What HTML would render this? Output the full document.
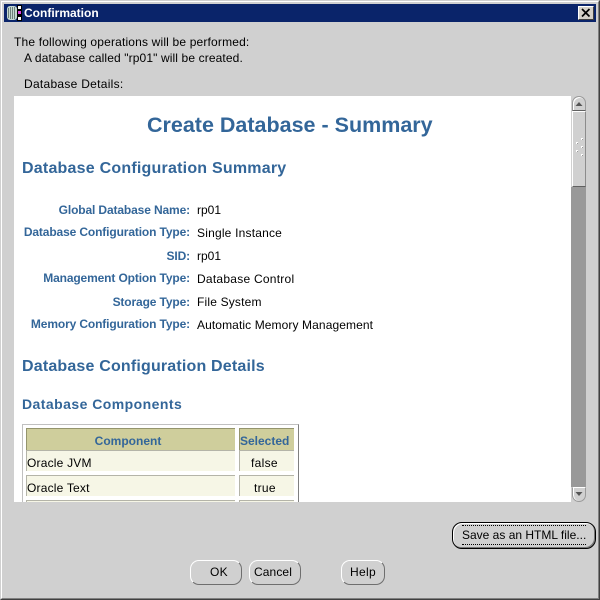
<!DOCTYPE html>
<html>
<head>
<meta charset="utf-8">
<style>
html,body{margin:0;padding:0}
body{width:600px;height:600px;overflow:hidden;position:relative;background:#d0d0d0;font-family:"Liberation Sans",sans-serif;font-size:12px;color:#000}
.a{position:absolute;white-space:nowrap;line-height:14px}
.b{position:absolute;box-sizing:border-box}
.blue{color:#336699;font-weight:bold}
.lab{right:410px;text-align:right;letter-spacing:-.13px}
.btn{position:absolute;box-sizing:border-box;text-align:center;background:#d0d0d0;border:1px solid #6e6e6e;border-top-color:#fff;border-left-color:#fff;border-radius:9px;line-height:23px;letter-spacing:.3px}
</style>
</head>
<body>
<div class="b" style="left:0;top:0;width:600px;height:600px;border:1px solid;border-color:#d0d0d0 #404040 #404040 #d0d0d0"></div>
<div class="b" style="left:1px;top:1px;width:598px;height:598px;border:1px solid;border-color:#fff #808080 #808080 #fff"></div>
<div class="b" style="left:4px;top:4px;width:592px;height:18px;background:#0a246a"></div>
<svg class="b" style="left:6px;top:5px" width="16" height="16" viewBox="0 0 16 16">
<rect x="1" y="1" width="10" height="14" rx="3" fill="#c4d8d0"/>
<path d="M2.5 3v10M4.5 2v12M6.5 2v12M8.5 2v12" stroke="#6c807a" stroke-width="1"/>
<rect x="11" y="0" width="5" height="16" fill="#000"/>
<path d="M12 1h3v3h-3zM12 12h3v3h-3z" fill="#fff"/>
<path d="M12 6h3v3h-3z" fill="#e040e0"/>
</svg>
<div class="a" style="left:24px;top:6px;color:#fff;font-weight:bold;font-size:12px">Confirmation</div>
<div class="b" style="left:578px;top:6px;width:16px;height:14px;background:#d4d0c8;border:1px solid;border-color:#fff #404040 #404040 #fff"></div>
<svg class="b" style="left:581px;top:8px" width="10" height="10" viewBox="0 0 10 10"><path d="M1 1L8.5 8.5M8.5 1L1 8.5" stroke="#000" stroke-width="1.7"/></svg>

<div class="a" style="left:14px;top:35px;letter-spacing:.17px">The following operations will be performed:</div>
<div class="a" style="left:24px;top:51px;letter-spacing:.12px">A database called "rp01" will be created.</div>
<div class="a" style="left:24px;top:77px;letter-spacing:.28px">Database Details:</div>

<div class="b" style="left:14px;top:96px;width:557px;height:406px;background:#fff"></div>
<div class="a" style="left:147px;top:112px;line-height:26px;font-size:21.5px;font-weight:bold;color:#336699">Create Database - Summary</div>
<div class="a blue" style="left:22px;top:160px;line-height:18px;font-size:16px;letter-spacing:.22px">Database Configuration Summary</div>

<div class="a blue lab" style="top:203px">Global Database Name:</div>
<div class="a blue lab" style="top:225px">Database Configuration Type:</div>
<div class="a blue lab" style="top:249px">SID:</div>
<div class="a blue lab" style="top:271px">Management Option Type:</div>
<div class="a blue lab" style="top:295px">Storage Type:</div>
<div class="a blue lab" style="top:317px">Memory Configuration Type:</div>

<div class="a" style="left:197px;top:203px">rp01</div>
<div class="a" style="left:197px;top:226px;letter-spacing:.2px">Single Instance</div>
<div class="a" style="left:197px;top:249px">rp01</div>
<div class="a" style="left:197px;top:272px;letter-spacing:.25px">Database Control</div>
<div class="a" style="left:197px;top:295px;letter-spacing:.18px">File System</div>
<div class="a" style="left:197px;top:318px;letter-spacing:.1px">Automatic Memory Management</div>

<div class="a blue" style="left:22px;top:358px;line-height:18px;font-size:16px;letter-spacing:.18px">Database Configuration Details</div>
<div class="a blue" style="left:22px;top:396px;line-height:16px;font-size:14px;letter-spacing:.45px">Database Components</div>

<div class="b" style="left:22px;top:424px;width:277px;height:78px;border:1px solid #c0c0c0;border-right-color:#808080;border-bottom:0"></div>
<div class="b" style="left:26px;top:428px;width:209px;height:22px;background:#cfce9c;border:1px solid #94946c;border-bottom:0;border-right:0"></div>
<div class="b" style="left:239px;top:428px;width:55px;height:22px;background:#cfce9c;border:1px solid #94946c;border-bottom:0;border-right:0"></div>
<div class="a blue" style="left:26px;top:434px;width:204px;text-align:center">Component</div>
<div class="a blue" style="left:240px;top:434px">Selected</div>

<div class="b" style="left:26px;top:450px;width:209px;height:21px;background:#f6f6e6;border:1px solid #b4b4a8;border-bottom:0;border-right:0"></div>
<div class="b" style="left:239px;top:450px;width:55px;height:21px;background:#f6f6e6;border:1px solid #b4b4a8;border-bottom:0;border-right:0"></div>
<div class="a" style="left:27px;top:456px;letter-spacing:.2px">Oracle JVM</div>
<div class="a" style="left:251px;top:456px;letter-spacing:.3px">false</div>

<div class="b" style="left:26px;top:475px;width:209px;height:21px;background:#f6f6e6;border:1px solid #b4b4a8;border-bottom:0;border-right:0"></div>
<div class="b" style="left:239px;top:475px;width:55px;height:21px;background:#f6f6e6;border:1px solid #b4b4a8;border-bottom:0;border-right:0"></div>
<div class="a" style="left:27px;top:481px;letter-spacing:.2px">Oracle Text</div>
<div class="a" style="left:254px;top:481px;letter-spacing:.3px">true</div>

<div class="b" style="left:26px;top:500px;width:209px;height:2px;background:#f6f6e6;border-top:1px solid #b4b4a8;border-left:1px solid #b4b4a8"></div>
<div class="b" style="left:239px;top:500px;width:55px;height:2px;background:#f6f6e6;border-top:1px solid #b4b4a8;border-left:1px solid #b4b4a8"></div>

<!-- scrollbar -->
<div class="b" style="left:571px;top:96px;width:15px;height:406px;background:#d0d0d0"></div>
<div class="b" style="left:571px;top:187px;width:15px;height:300px;background:#999999"></div>
<div class="b" style="left:572px;top:96px;width:14px;height:15px;background:#d0d0d0;border:1px solid #9a9a9a;border-bottom:1px solid #606060;border-radius:7px 7px 0 0;box-shadow:inset 1px 1px 0 #fff"></div>
<svg class="b" style="left:575px;top:101px" width="8" height="6"><path d="M4 1L7.5 5H.5z" fill="#555"/></svg>
<div class="b" style="left:572px;top:111px;width:14px;height:76px;background:#d0d0d0;border:1px solid #8c8c8c;border-left-color:#fff;border-top-color:#fff;border-bottom:1px solid #606060"></div>
<svg class="b" style="left:575px;top:137px" width="10" height="20"><path d="M6 1h2v2h-2zM1 5h2v2h-2zM6 9h2v2h-2zM1 13h2v2h-2zM6 17h2v2h-2z" fill="#fff"/><path d="M7 2h1v1h-1zM2 6h1v1h-1zM7 10h1v1h-1zM2 14h1v1h-1zM7 18h1v1h-1z" fill="#999"/></svg>
<div class="b" style="left:572px;top:487px;width:14px;height:15px;background:#d0d0d0;border:1px solid #9a9a9a;border-top-color:#fff;border-radius:0 0 7px 7px;box-shadow:inset 1px 0 0 #fff"></div>
<svg class="b" style="left:575px;top:491px" width="8" height="6"><path d="M.5 1h7L4 5z" fill="#555"/></svg>

<!-- buttons -->
<div class="b" style="left:452px;top:522px;width:144px;height:27px;border:1px solid #000;border-radius:10px;box-shadow:inset 1px 1px 0 #fff,inset -1px -1px 0 #777"></div>
<div class="b" style="left:462px;top:525px;width:124px;height:20px;border-top:1px dotted #000;border-bottom:1px dotted #000"></div>
<div class="a" style="left:462px;top:528px">Save as an HTML file...</div>
<div class="btn" style="left:190px;top:560px;width:52px;height:25px;padding-left:6px">OK</div>
<div class="btn" style="left:249px;top:560px;width:52px;height:25px;letter-spacing:.1px;padding-right:4px">Cancel</div>
<div class="btn" style="left:341px;top:560px;width:44px;height:25px">Help</div>
</body>
</html>
